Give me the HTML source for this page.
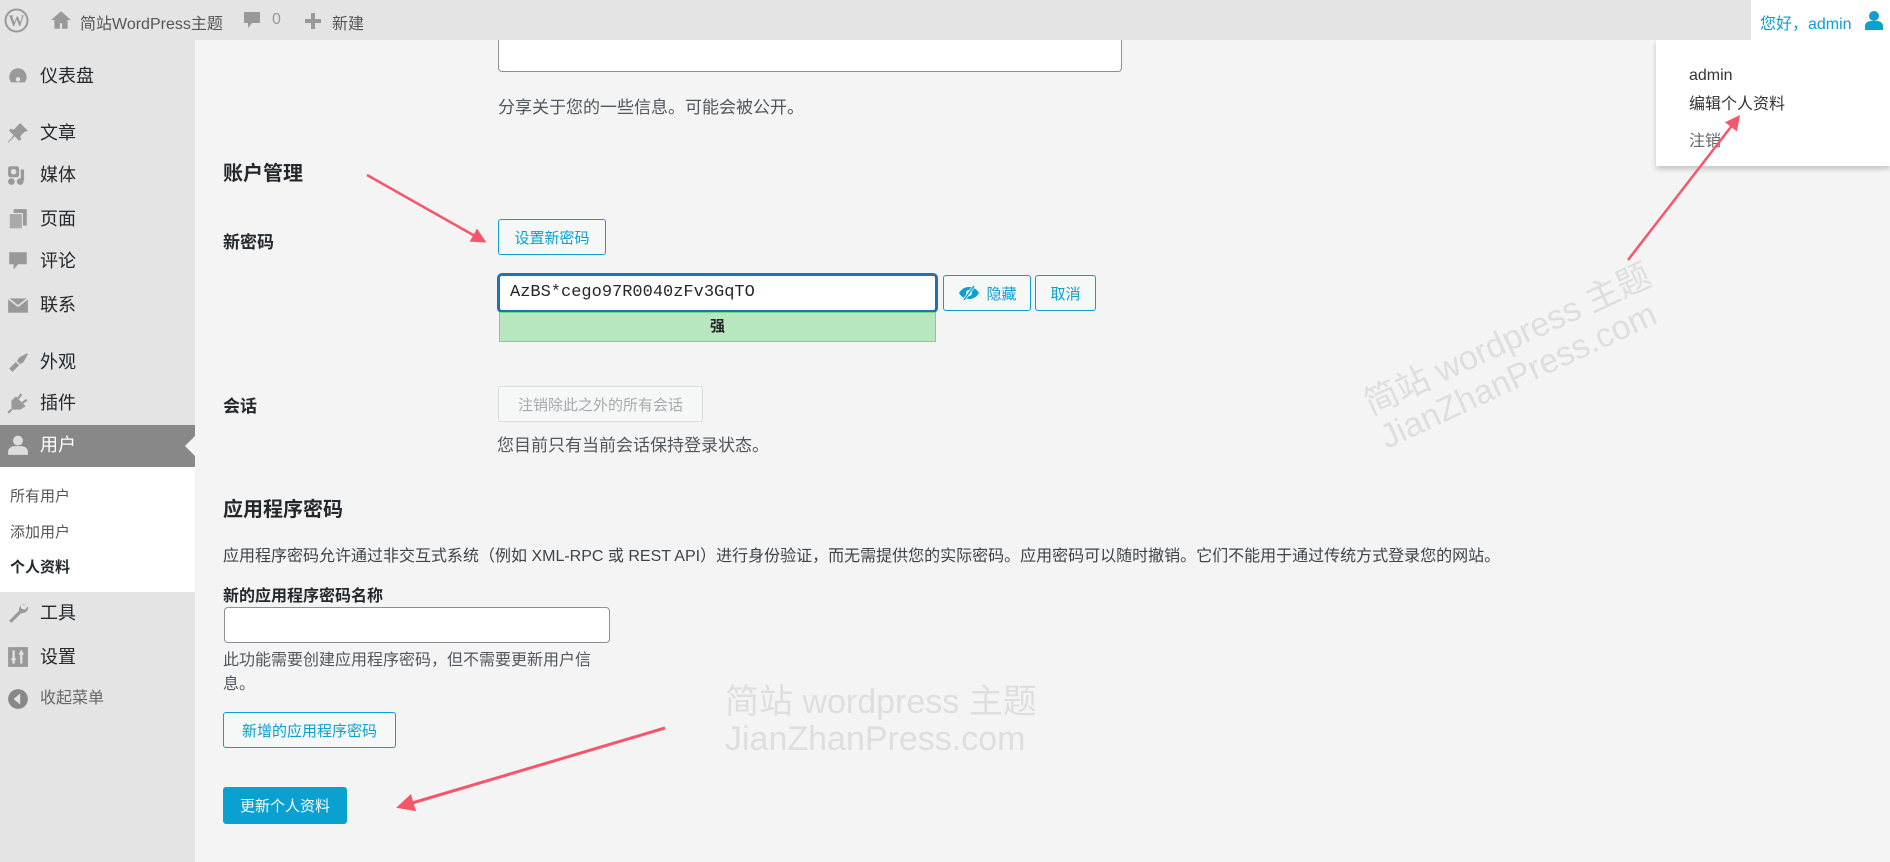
<!DOCTYPE html>
<html><head><meta charset="utf-8">
<style>
*{margin:0;padding:0;box-sizing:border-box}
body{width:1890px;height:862px;overflow:hidden;background:#f4f4f4;font-family:"Liberation Sans","Noto Sans CJK SC",sans-serif;position:relative;color:#23282d}
.a{position:absolute;white-space:nowrap}
#bar{position:absolute;left:0;top:0;width:1890px;height:40px;background:#e4e4e4;z-index:5}
#side{position:absolute;left:0;top:40px;width:195px;height:822px;background:#e4e4e4}
.m{position:absolute;left:40px;font-size:18px;color:#23282d;line-height:20px}
.ic{position:absolute;left:7px;width:22px;height:22px}
.btn{position:absolute;border:1px solid #0aa0d0;border-radius:3px;color:#0aa0d0;background:#f6f7f7;font-size:15px;display:flex;align-items:center;justify-content:center}
.wm{color:#dedede;font-size:34px;line-height:37px;font-family:"Liberation Sans","Noto Sans CJK SC",sans-serif}
</style></head><body>
<div id="bar">
<svg class="a" style="left:4px;top:8px" width="25" height="25" viewBox="0 0 25 25"><circle cx="12.5" cy="12.5" r="11" fill="none" stroke="#999" stroke-width="2"/><text x="12.5" y="18" font-size="16" font-family="Liberation Serif" text-anchor="middle" fill="#999" font-weight="bold">W</text></svg>
<svg class="a" style="left:50px;top:9px" width="22" height="22" viewBox="0 0 20 20"><path d="M10 2L1 10h3v8h5v-5h2v5h5v-8h3z" fill="#999"/></svg>
<div class="a" style="left:80px;top:10px;font-size:16px;color:#555">简站WordPress主题</div>
<svg class="a" style="left:243px;top:11px" width="18" height="20" viewBox="0 0 18 20"><path d="M1 1h16v11H9l-4 5v-5H1z" fill="#999"/></svg>
<div class="a" style="left:272px;top:11px;font-size:16px;color:#999">0</div>
<svg class="a" style="left:305px;top:13px" width="16" height="16"><rect x="6" y="0" width="4" height="16" fill="#999"/><rect x="0" y="6" width="16" height="4" fill="#999"/></svg>
<div class="a" style="left:332px;top:10px;font-size:16px;color:#555">新建</div>
<div class="a" style="left:1751px;top:0;width:139px;height:40px;background:#fff"></div>
<div class="a" style="left:1760px;top:10px;font-size:16px;color:#0aa0d0">您好，admin</div>
<svg class="a" style="left:1864px;top:10px" width="20" height="20" viewBox="0 0 20 20"><circle cx="10" cy="6" r="5" fill="#0aa0d0"/><path d="M1 20v-4c0-3 3-5 6-5h6c3 0 6 2 6 5v4z" fill="#0aa0d0"/></svg>
</div>
<div id="side">
<svg class="ic" style="top:25px" viewBox="0 0 20 20"><path d="M10 3a8 8 0 0 0-8 8c0 2 .7 3.5 1.8 4.8h12.4A8 8 0 0 0 10 3z" fill="#999"/><circle cx="10" cy="13" r="2" fill="#e4e4e4"/></svg>
<div class="m" style="top:26px">仪表盘</div>
<svg class="ic" style="top:82px" viewBox="0 0 20 20"><path d="M12 1l7 7-3 1-4 4 1 3-2 1-4-4-6 6v-1l5-6-4-4 1-2 3 1 4-4z" fill="#999"/></svg>
<div class="m" style="top:83px">文章</div>
<svg class="ic" style="top:124px" viewBox="0 0 20 20"><rect x="1" y="2" width="10" height="10" rx="2" fill="#999"/><circle cx="6" cy="7" r="2.5" fill="#e4e4e4"/><path d="M14 5v10" stroke="#999" stroke-width="3"/><circle cx="12" cy="16" r="3" fill="#999"/><circle cx="4" cy="16" r="3" fill="#999"/></svg>
<div class="m" style="top:125px">媒体</div>
<svg class="ic" style="top:168px" viewBox="0 0 20 20"><rect x="6" y="1" width="12" height="15" fill="#999"/><rect x="2" y="5" width="12" height="14" fill="#aaa" stroke="#e4e4e4"/></svg>
<div class="m" style="top:169px">页面</div>
<svg class="ic" style="top:210px" viewBox="0 0 20 20"><path d="M2 2h16v11h-8l-4 5v-5H2z" fill="#999"/></svg>
<div class="m" style="top:211px">评论</div>
<svg class="ic" style="top:254px" viewBox="0 0 20 20"><rect x="1" y="4" width="18" height="13" fill="#999"/><path d="M1 4l9 7 9-7" fill="none" stroke="#e4e4e4" stroke-width="1.5"/></svg>
<div class="m" style="top:255px">联系</div>
<svg class="ic" style="top:311px" viewBox="0 0 20 20"><path d="M18 2l-7 4-2 3 3 3 3-2 4-7zM8 10l3 3-6 6-3-3z" fill="#999"/></svg>
<div class="m" style="top:312px">外观</div>
<svg class="ic" style="top:352px" viewBox="0 0 20 20"><path d="M13 2l-3 4M18 7l-4 3" stroke="#999" stroke-width="2"/><path d="M8 4l9 9-5 3H4v-8z" fill="#999"/><path d="M4 16l-3 3" stroke="#999" stroke-width="2"/></svg>
<div class="m" style="top:353px">插件</div>
<div class="a" style="left:0;top:385px;width:195px;height:42px;background:#888"></div>
<div class="a" style="left:185px;top:396px;width:0;height:0;border-top:10px solid transparent;border-bottom:10px solid transparent;border-right:10px solid #f4f4f4"></div>
<svg class="ic" style="top:394px" viewBox="0 0 20 20"><circle cx="10" cy="6" r="4.5" fill="#ddd"/><path d="M1 19v-3c0-3 3-5 6-5h6c3 0 6 2 6 5v3z" fill="#ddd"/></svg>
<div class="m" style="top:395px;color:#fff">用户</div>
<div class="a" style="left:0;top:427px;width:195px;height:125px;background:#fff"></div>
<div class="a" style="left:10px;top:445px;font-size:15px;color:#555">所有用户</div>
<div class="a" style="left:10px;top:481px;font-size:15px;color:#555">添加用户</div>
<div class="a" style="left:10px;top:516px;font-size:15px;color:#23282d;font-weight:bold">个人资料</div>
<svg class="ic" style="top:562px" viewBox="0 0 20 20"><path d="M17 2a5 5 0 0 0-6 6L2 17l2 2 9-9a5 5 0 0 0 6-6l-3 3-3-1-1-3z" fill="#999"/></svg>
<div class="m" style="top:563px">工具</div>
<svg class="ic" style="top:606px" viewBox="0 0 20 20"><rect x="1" y="1" width="18" height="18" fill="#999"/><path d="M6 4v12M13 4v12" stroke="#e4e4e4" stroke-width="2"/><rect x="4" y="11" width="4" height="2" fill="#e4e4e4"/><rect x="11" y="6" width="4" height="2" fill="#e4e4e4"/></svg>
<div class="m" style="top:607px">设置</div>
<svg class="ic" style="top:648px" viewBox="0 0 20 20"><circle cx="10" cy="10" r="9" fill="#888"/><path d="M12 5v10l-6-5z" fill="#e4e4e4"/></svg>
<div class="m" style="top:649px;font-size:16px;color:#666">收起菜单</div>
</div>

<div class="a" style="left:498px;top:30px;width:624px;height:42px;background:#fff;border:1px solid #8c8f94;border-top:none;border-radius:0 0 4px 4px"></div>
<div class="a" style="left:498px;top:93px;font-size:17px;color:#50575e">分享关于您的一些信息。可能会被公开。</div>
<div class="a" style="left:223px;top:157px;font-size:20px;font-weight:bold">账户管理</div>
<div class="a" style="left:223px;top:228px;font-size:17px;font-weight:bold">新密码</div>
<div class="btn" style="left:498px;top:219px;width:108px;height:36px">设置新密码</div>
<div class="a" style="left:498px;top:274px;width:439px;height:38px;background:#fff;border:2px solid #2271b1;border-radius:4px;box-shadow:0 0 0 1px #2271b1;font-family:'Liberation Mono',monospace;font-size:17px;line-height:34px;padding-left:10px;color:#23282d">AzBS*cego97R0040zFv3GqTO</div>
<div class="a" style="left:499px;top:312px;width:437px;height:30px;background:#b8e6bf;border:1px solid #68de7c;text-align:center;font-size:15px;font-weight:bold;line-height:28px">强</div>
<div class="btn" style="left:943px;top:275px;width:88px;height:36px"><svg width="24" height="16" viewBox="0 0 22 16" style="margin-right:5px"><path d="M1 8c3-5 7-6 10-6s7 1 10 6c-3 5-7 6-10 6S4 13 1 8z" fill="#0aa0d0"/><circle cx="11" cy="8" r="3" fill="#f6f7f7"/><path d="M16 1L6 15" stroke="#f6f7f7" stroke-width="3"/><path d="M16 1L6 15" stroke="#0aa0d0" stroke-width="1.5"/></svg>隐藏</div>
<div class="btn" style="left:1035px;top:275px;width:61px;height:36px">取消</div>
<div class="a" style="left:223px;top:392px;font-size:17px;font-weight:bold">会话</div>
<div class="btn" style="left:498px;top:386px;width:205px;height:36px;border-color:#dcdcde;color:#a7aaad">注销除此之外的所有会话</div>
<div class="a" style="left:497px;top:431px;font-size:17px;color:#50575e">您目前只有当前会话保持登录状态。</div>
<div class="a" style="left:223px;top:493px;font-size:20px;font-weight:bold">应用程序密码</div>
<div class="a" style="left:223px;top:542px;font-size:16px;color:#3c434a">应用程序密码允许通过非交互式系统（例如 XML-RPC 或 REST API）进行身份验证，而无需提供您的实际密码。应用密码可以随时撤销。它们不能用于通过传统方式登录您的网站。</div>
<div class="a" style="left:223px;top:582px;font-size:16px;font-weight:bold">新的应用程序密码名称</div>
<div class="a" style="left:224px;top:607px;width:386px;height:36px;background:#fff;border:1px solid #8c8f94;border-radius:4px"></div>
<div class="a" style="left:223px;top:649px;font-size:16px;color:#50575e;line-height:24px">此功能需要创建应用程序密码，但不需要更新用户信<br>息。</div>
<div class="btn" style="left:223px;top:712px;width:173px;height:36px">新增的应用程序密码</div>
<div class="btn" style="left:223px;top:787px;width:124px;height:37px;background:#0aa0d0;color:#fff;border-color:#0aa0d0">更新个人资料</div>

<div class="a wm" style="left:725px;top:684px">简站 wordpress 主题<br>JianZhanPress.com</div>
<div class="a wm" style="left:1360px;top:320px;transform:rotate(-25deg);transform-origin:center">简站 wordpress 主题<br>JianZhanPress.com</div>

<div class="a" style="left:1656px;top:40px;width:234px;height:126px;background:#fff;box-shadow:0 3px 5px rgba(0,0,0,.2)"></div>
<div class="a" style="left:1689px;top:67px;font-size:16px;color:#333">admin</div>
<div class="a" style="left:1689px;top:90px;font-size:16px;color:#333">编辑个人资料</div>
<div class="a" style="left:1689px;top:127px;font-size:16px;color:#666">注销</div>

<svg class="a" style="left:0;top:0" width="1890" height="862">
<defs><marker id="ah" markerWidth="6" markerHeight="6" refX="4" refY="3" orient="auto"><path d="M0 0L6 3L0 6z" fill="#f5566a"/></marker></defs>
<path d="M367 175L482 240" stroke="#f5566a" stroke-width="2.5" marker-end="url(#ah)"/>
<path d="M1628 260L1737 119" stroke="#f5566a" stroke-width="2.5" marker-end="url(#ah)"/>
<path d="M665 728L402 806" stroke="#f5566a" stroke-width="3" marker-end="url(#ah)"/>
</svg>
</body></html>
